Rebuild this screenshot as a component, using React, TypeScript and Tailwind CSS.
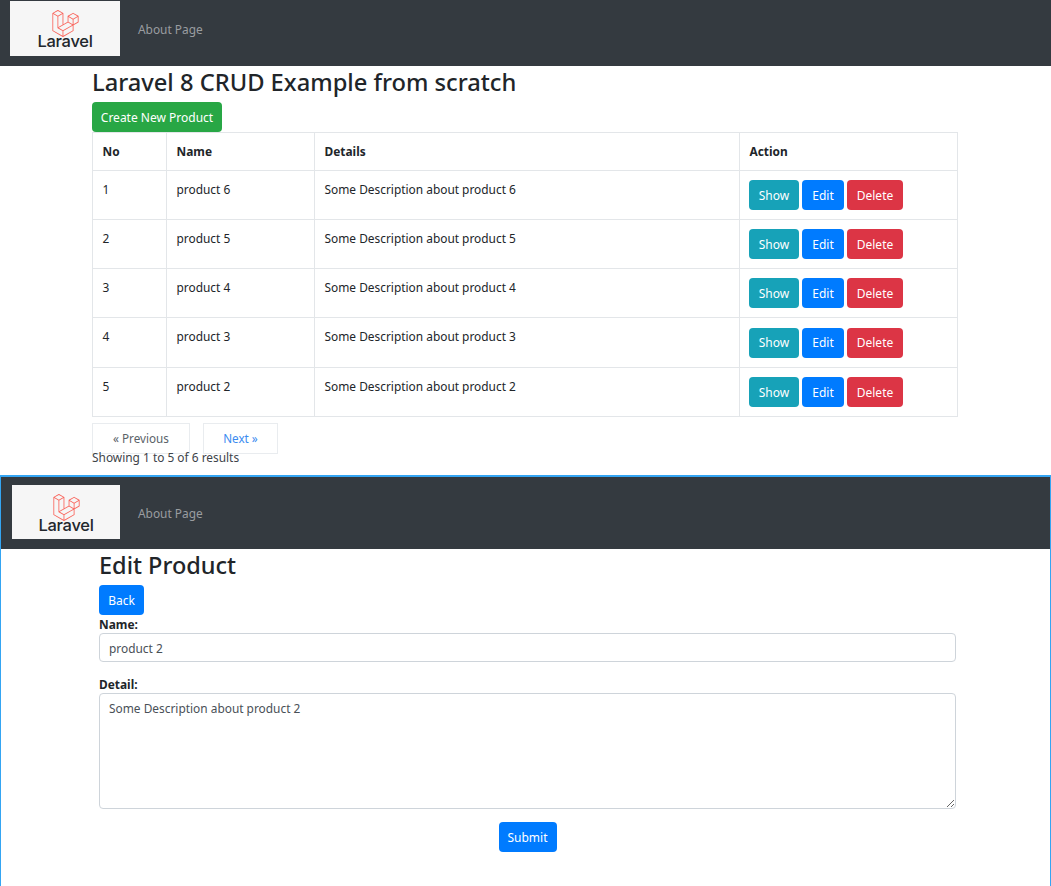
import { SiLaravel } from "react-icons/si";

const PRODUCTS = [
  { no: 1, name: "product 6", details: "Some Description about product 6" },
  { no: 2, name: "product 5", details: "Some Description about product 5" },
  { no: 3, name: "product 4", details: "Some Description about product 4" },
  { no: 4, name: "product 3", details: "Some Description about product 3" },
  { no: 5, name: "product 2", details: "Some Description about product 2" },
];

const btn = "flex items-center justify-center h-[30px] rounded-[4px] text-white text-[12px] pt-px";
const cell = "border border-[#e3e6e9] px-[9.5px]";

function Logo({ box }: { box: string }) {
  return (
    <div className={"flex flex-col items-center bg-[#f6f6f6] shrink-0 " + box}>
      <SiLaravel className="text-[#f9655c] w-[27px] h-[27px] mt-[9px]" />
      <span className="text-[#22272c] text-[16.5px] leading-[18px] -mt-[5px] font-medium font-['Inter',sans-serif] tracking-[-0.3px]">Laravel</span>
    </div>
  );
}

function ProductsPage() {
  return (
    <section className="h-[475px]">
      <nav className="h-[66px] bg-[#343a40] flex items-start">
        <Logo box="w-[110px] h-[55px] ml-[10px] mt-px" />
        <a className="ml-[18px] mt-[20px] text-[11.9px] leading-[18px] text-[#9a9da0]">About Page</a>
      </nav>
      <main className="ml-[92px] w-[866px]">
        <h2 className="text-[23.7px] leading-[33px] font-medium text-[#212529] mb-[3px]">Laravel 8 CRUD Example from scratch</h2>
        <a className={btn + " w-[130px] bg-[#28a745]"}>Create New Product</a>
        <table className="w-[865px] table-fixed border-collapse text-[11.9px] text-[#212529]">
          <colgroup>
            <col className="w-[74px]" />
            <col className="w-[148px]" />
            <col className="w-[425px]" />
            <col className="w-[218px]" />
          </colgroup>
          <thead>
            <tr className="h-[38px]">
              {["No", "Name", "Details", "Action"].map(h => (
                <th key={h} className={cell + " text-left font-bold align-middle"}>{h}</th>
              ))}
            </tr>
          </thead>
          <tbody>
            {PRODUCTS.map((p, i) => (
              <tr key={p.no} className={i === 3 ? "h-[50px]" : "h-[49px]"}>
                <td className={cell + " align-top pt-[10px]"}>{p.no}</td>
                <td className={cell + " align-top pt-[10px]"}>{p.name}</td>
                <td className={cell + " align-top pt-[10px]"}>{p.details}</td>
                <td className="border border-[#e3e6e9] pl-[9px] align-middle">
                  <div className="flex gap-[3px]">
                    <a className={btn + " w-[50px] bg-[#17a2b8]"}>Show</a>
                    <a className={btn + " w-[42px] bg-[#007bff]"}>Edit</a>
                    <a className={btn + " w-[56px] bg-[#dc3545]"}>Delete</a>
                  </div>
                </td>
              </tr>
            ))}
          </tbody>
        </table>
        <div className="flex gap-[13px] mt-[6px] text-[11.7px]">
          <a className="w-[98px] h-[31px] pt-px border border-[#e9ecef] flex items-center justify-center text-[#5a6268]">« Previous</a>
          <a className="w-[75px] h-[31px] pt-px border border-[#e9ecef] flex items-center justify-center text-[#3b8bf0]">Next »</a>
        </div>
        <p className="text-[11.9px] leading-[18px] text-[#3d4349] -mt-[6px]">Showing 1 to 5 of 6 results</p>
      </main>
    </section>
  );
}

function EditPage() {
  return (
    <section className="h-[411px] border-x border-t-2 border-[#34a5f3]">
      <nav className="h-[72px] bg-[#343a40] flex items-start">
        <Logo box="w-[108px] h-[54px] ml-[11px] mt-[8px]" />
        <a className="ml-[18px] mt-[27px] text-[11.9px] leading-[18px] text-[#9a9da0]">About Page</a>
      </nav>
      <main className="ml-[98px] w-[857px] text-[#212529]">
        <h2 className="text-[23.5px] leading-[33px] font-medium mb-[3px]">Edit Product</h2>
        <a className={btn + " w-[45px] h-[29px] bg-[#007bff]"}>Back</a>
        <form>
          <label className="block text-[11.9px] leading-[18px] font-bold">Name:</label>
          <input
            readOnly
            value="product 2"
            className="block w-full h-[29px] border border-[#ced4da] rounded-[4px] px-[9px] text-[11.9px] text-[#495057] outline-none"
          />
          <label className="block text-[11.9px] leading-[18px] font-bold mt-[13px]">Detail:</label>
          <textarea
            readOnly
            value="Some Description about product 2"
            className="block w-full h-[116px] border border-[#ced4da] rounded-[4px] px-[9px] py-[4px] text-[11.9px] leading-[20px] text-[#495057] outline-none resize-y"
          />
          <div className="flex justify-center mt-[13px]">
            <button type="button" className={btn + " w-[58px] h-[29px] bg-[#007bff]"}>Submit</button>
          </div>
        </form>
      </main>
    </section>
  );
}

export default function App() {
  return (
    <div className="w-[1051px] h-[886px] overflow-hidden bg-white font-['Noto_Sans',sans-serif]">
      <ProductsPage />
      <EditPage />
    </div>
  );
}
